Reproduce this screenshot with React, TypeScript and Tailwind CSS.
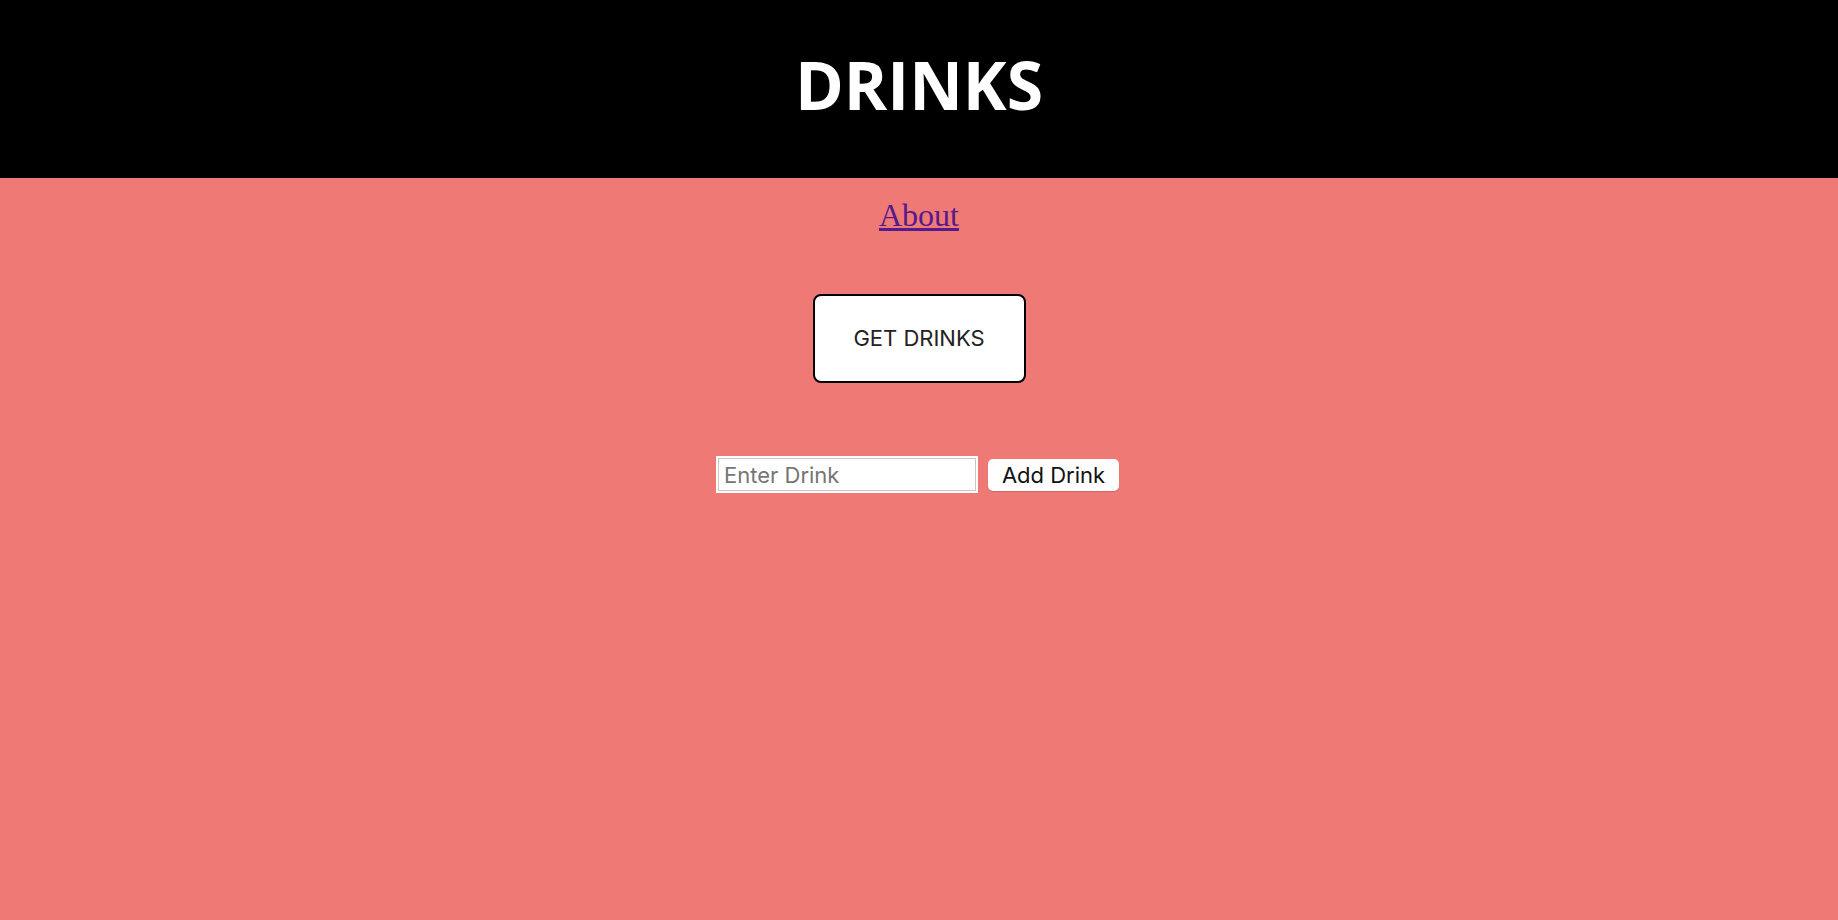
import React from "react";

export default function App() {
  return (
    <div className="min-h-[920px] w-full bg-[#ef7974]">
      <header className="h-[178px] bg-black pt-[51px]">
        <h1 className="text-center font-['Open_Sans',sans-serif] text-[66px] font-bold leading-none text-white">
          DRINKS
        </h1>
      </header>
      <div className="flex flex-col items-center">
        <a
          href="#"
          className="mt-[13px] font-['Liberation_Serif',serif] text-[32px] text-[#551a8b] underline"
        >
          About
        </a>
        <button className="mt-[55px] h-[89px] w-[213px] rounded-[8px] border-2 border-black bg-white font-['Inter',sans-serif] text-[22px] text-[#222]">
          GET DRINKS
        </button>
        <div className="mt-[73px] flex items-center gap-[10px] pr-[3px]">
          <input
            placeholder="Enter Drink"
            className="h-[37px] w-[262px] border-[2px] border-white bg-white px-[6px] font-['Inter',sans-serif] text-[22px] text-black outline outline-1 outline-offset-[-3px] outline-[#c8c8c8] placeholder:text-[#757575]"
          />
          <button className="h-[32px] w-[131px] rounded-[5px] bg-white font-['Inter',sans-serif] text-[22px] text-[#111] shadow-[0_1px_1px_rgba(0,0,0,0.15)]">
            Add Drink
          </button>
        </div>
      </div>
    </div>
  );
}
